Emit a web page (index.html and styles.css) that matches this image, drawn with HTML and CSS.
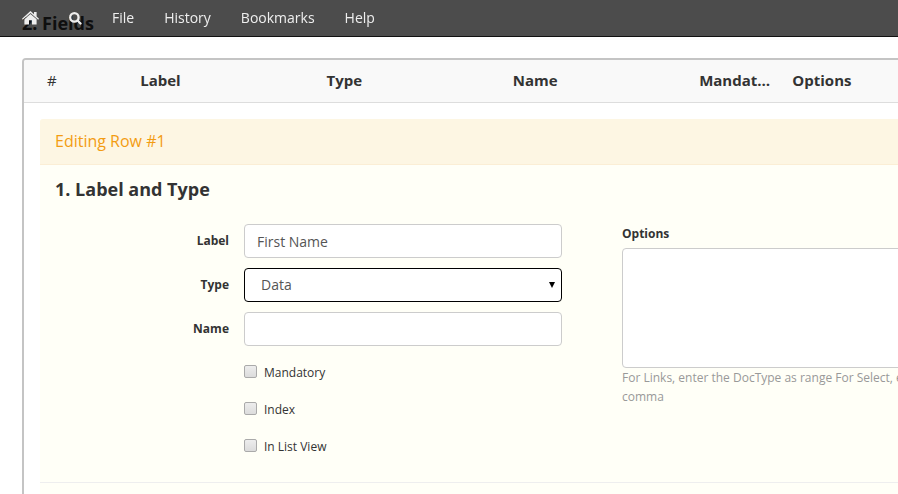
FILE: index.html
```html
<!DOCTYPE html>
<html lang="en">
<head>
<meta charset="utf-8">
<title>Fields</title>
<link rel="stylesheet" href="styles.css">
</head>
<body>
<nav class="navbar">
  <a class="nav-link" href="#" aria-label="Home"><svg class="icon-home" viewBox="0 0 17 14" aria-hidden="true"><path d="M8.5 0 L12 3.2 V.9 H14.6 V5.6 L17 7.8 L16.2 8.8 L8.5 2 L.8 8.8 L0 7.8 Z"/><path d="M8.5 2.9 L14.6 8.2 V13.6 H10 V9.2 H7 V13.6 H2.4 V8.2 Z"/></svg></a>
  <a class="nav-link" href="#" aria-label="Search"><svg class="icon-search" viewBox="0 0 14 14" aria-hidden="true"><circle cx="5.8" cy="5.8" r="4.5"/><path d="M9.2 9.2 L12.4 12.4"/></svg></a>
  <a class="nav-link" href="#">File</a>
  <a class="nav-link" href="#">History</a>
  <a class="nav-link" href="#">Bookmarks</a>
  <a class="nav-link" href="#">Help</a>
</nav>
<main class="page">
  <h3 class="heading">2. Fields</h3>
  <section class="grid">
    <div class="grid-head">
      <div class="cell cell-index">#</div>
      <div class="cell">Label</div>
      <div class="cell">Type</div>
      <div class="cell">Name</div>
      <div class="cell">Mandatory</div>
      <div class="cell">Options</div>
    </div>
    <form class="panel">
      <div class="panel-head">Editing Row #1</div>
      <div class="panel-body">
        <h3 class="heading">1. Label and Type</h3>
        <div class="columns">
          <div class="column">
            <div class="field">
              <label for="label">Label</label>
              <input class="control" id="label" type="text" value="First Name">
            </div>
            <div class="field">
              <label for="type">Type</label>
              <div class="select">
                <select class="control" id="type"><option>Data</option></select>
                <svg class="arrow" viewBox="0 0 6 6" aria-hidden="true"><path d="M0 0 H6 L3 6 Z"/></svg>
              </div>
            </div>
            <div class="field">
              <label for="name">Name</label>
              <input class="control" id="name" type="text">
            </div>
            <div class="checks">
              <label class="check"><input type="checkbox">Mandatory</label>
              <label class="check"><input type="checkbox">Index</label>
              <label class="check"><input type="checkbox">In List View</label>
            </div>
          </div>
          <div class="column column-options">
            <label for="options">Options</label>
            <textarea class="control options" id="options"></textarea>
            <p class="help">For Links, enter the DocType as range For Select, enter list of Options separated by comma</p>
          </div>
        </div>
      </div>
    </form>
  </section>
</main>
</body>
</html>
```
FILE: styles.css
```css
* {
  box-sizing: border-box;
}

body {
  margin: 0;
  height: 100vh;
  overflow: hidden;
  background: #fff;
  color: #333;
  font: 14px/20px "Open Sans", "Noto Sans", sans-serif;
}

.navbar {
  position: fixed;
  top: 0;
  left: 0;
  right: 0;
  z-index: 1;
  display: flex;
  height: 37px;
  padding: 0 7px;
  background: rgba(0, 0, 0, 0.7);
  border-bottom: 1px solid #111;
}

.nav-link {
  display: flex;
  align-items: center;
  padding: 0 15px;
  color: #eee;
  text-decoration: none;
}

.icon-home {
  width: 17px;
  height: 14px;
  fill: #eee;
}

.icon-search {
  width: 13px;
  height: 13px;
  fill: none;
  stroke: #eee;
  stroke-width: 2.5;
  stroke-linecap: round;
}

.page {
  display: flex;
  flex-direction: column;
  min-width: 1162px;
  height: 100%;
  padding: 12px 0 0 22px;
}

.heading {
  margin: 0;
  font-size: 18px;
  line-height: 22px;
  font-weight: 700;
}

.grid {
  display: flex;
  flex-direction: column;
  flex: 1;
  margin-top: 24px;
  border: 2px solid #c4c4c4;
  border-bottom: 0;
  border-radius: 4px 4px 0 0;
}

.grid-head {
  display: grid;
  grid-template-columns: 1fr 2fr 2fr 2fr 1fr 4fr;
  padding: 10px 10px 12px 8px;
  background: #f9f9f9;
  border-bottom: 1px solid #ddd;
  border-radius: 2px 2px 0 0;
  font-size: 15px;
  font-weight: 700;
}

.cell {
  min-width: 0;
  padding-left: 15px;
  overflow: hidden;
  text-overflow: ellipsis;
  white-space: nowrap;
}

.cell-index {
  font-weight: 400;
}

.panel {
  flex: 1;
  margin: 16px 16px 0;
  background: #fffff7;
  border-radius: 3px 3px 0 0;
}

.panel-head {
  padding: 12px 15px 13px;
  background: #fdf6e3;
  border-bottom: 1px solid #fbeed5;
  border-radius: 3px 3px 0 0;
  color: #f39c12;
  font-size: 16px;
}

.panel-body {
  padding-top: 13px;
  padding-bottom: 25px;
  border-bottom: 1px solid #eee;
}

.panel-body .heading {
  padding: 0 15px;
}

.columns {
  display: grid;
  grid-template-columns: 1fr 1fr;
  margin-top: 24px;
}

.column {
  display: flex;
  flex-direction: column;
  gap: 10px;
  padding: 0 15px;
  font-size: 12px;
}

.column-options {
  gap: 0;
  padding: 0 30px;
}

.column-options label {
  margin-bottom: 4px;
  font-weight: 700;
}

.field {
  display: grid;
  grid-template-columns: 1fr 2fr;
  align-items: center;
  font-weight: 700;
  text-align: right;
}

.field > :last-child {
  margin: 0 15px;
}

.control {
  display: block;
  min-width: 0;
  height: 34px;
  padding: 6px 12px;
  background: #fff;
  border: 1px solid #ccc;
  border-radius: 4px;
  color: #555;
  font: 14px/20px "Open Sans", "Noto Sans", sans-serif;
}

.select {
  position: relative;
}

.select .control {
  width: 100%;
  padding-left: 16px;
  border-color: #000;
  appearance: none;
}

.arrow {
  position: absolute;
  top: 14px;
  right: 7px;
  width: 6px;
  height: 6px;
  pointer-events: none;
}

.checks {
  display: grid;
  gap: 17px;
  margin-top: 7px;
  margin-left: calc(100% / 3 + 15px);
}

.check {
  display: flex;
  align-items: center;
  gap: 7px;
}

.check input {
  width: 13px;
  height: 13px;
  margin: 0 0 3px;
  appearance: none;
  background: linear-gradient(#ededed, #dcdcdc);
  border: 1px solid #aaa;
  border-radius: 2px;
}

.options {
  height: 120px;
  resize: none;
}

.help {
  margin: 0;
  color: #999;
  line-height: 19px;
}
```
